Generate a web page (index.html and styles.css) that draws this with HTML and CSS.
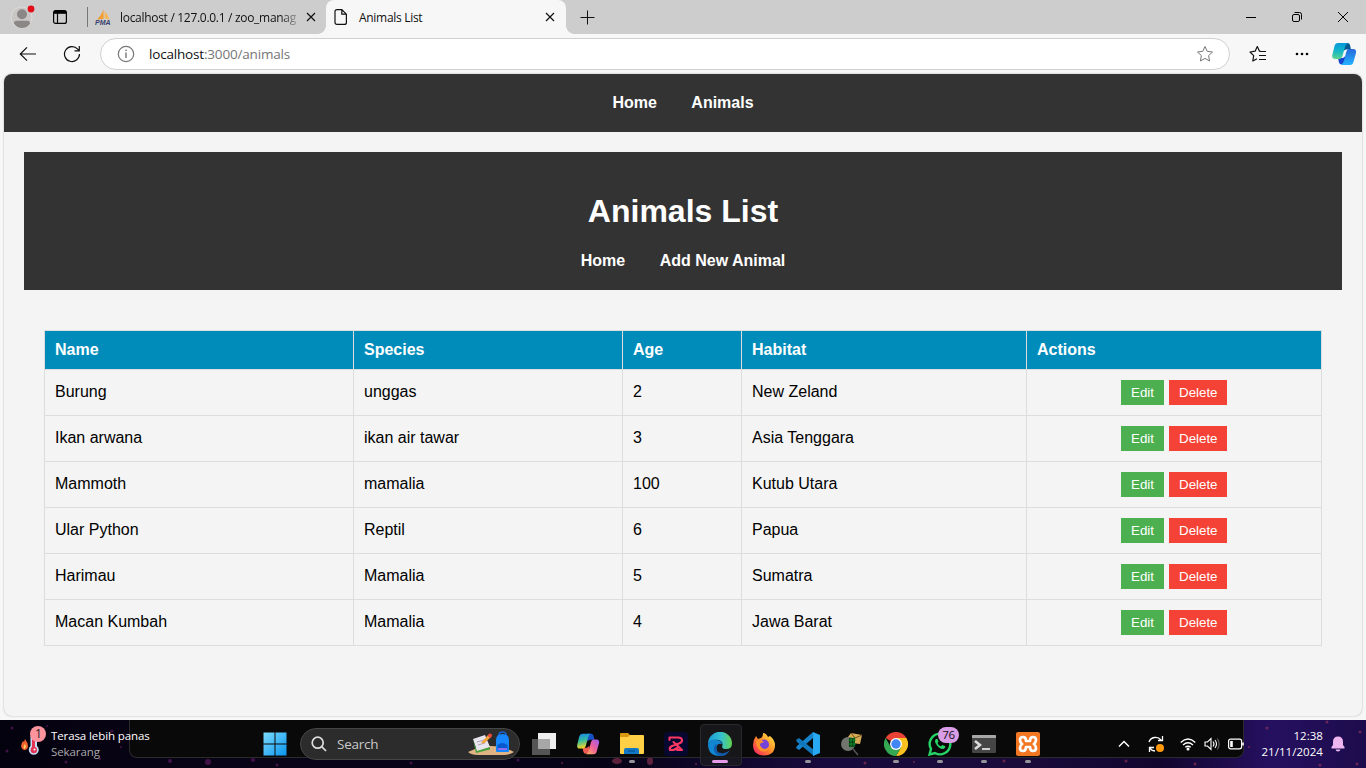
FILE: index.html
```html
<!DOCTYPE html>
<html lang="en">
<head>
<meta charset="utf-8">
<title>Animals List</title>
<link rel="stylesheet" href="styles.css">
</head>
<body>
<div class="desktop">
  <header class="tabstrip">
    <svg class="avatar" width="26" height="26" viewBox="0 0 26 26"><circle cx="12.5" cy="13.5" r="10.500" fill="#c9c7c5" stroke="#dedcda"/><circle cx="13" cy="10.300" r="5" fill="#8b8785"/><path d="M5 19.500Q5 16.800 7.500 16.800H18.500Q21 16.800 21 19.500Q18 24 13 24Q8 24 5 19.500Z" fill="#8b8785"/><circle cx="22" cy="5" r="3.400" fill="#e30b17"/></svg>
    <svg class="workspaces" width="16" height="16" viewBox="0 0 16 16" fill="none" stroke="#000"><rect x="1.600" y="1.600" width="12.800" height="12.800" rx="2" stroke-width="1.200"/><path d="M2 3.300H14" stroke-width="3"/><path d="M5.500 3V14.500" stroke-width="1.200"/></svg>
    <div class="tab tab-idle">
      <svg width="16" height="16" viewBox="0 0 16 16"><path d="M8.500 0V10L2 10.500Q6.500 6.500 8.500 0Z" fill="#f39b2d"/><path d="M9.500 2Q13.500 6 14.500 10.500L9.800 9.800Z" fill="#f7b75b"/><text x="0" y="15.700" class="pma">PMA</text></svg>
      <span class="tab-title fade">localhost / 127.0.0.1 / zoo_manag</span>
      <svg class="close" width="10" height="10" viewBox="0 0 10 10" stroke="#111" stroke-width="1.200"><path d="M1 1L9 9M9 1L1 9"/></svg>
    </div>
    <div class="tab tab-active">
      <svg width="14" height="18" viewBox="0 0 14 18" fill="none" stroke="#111" stroke-width="1.200"><path d="M3 1.600H7.800L12.400 6.200V14.400Q12.400 16.400 10.400 16.400H3Q1 16.400 1 14.400V3.600Q1 1.600 3 1.600ZM7.800 1.800V6.200H12.200"/></svg>
      <span class="tab-title">Animals List</span>
      <svg class="close" width="10" height="10" viewBox="0 0 10 10" stroke="#111" stroke-width="1.200"><path d="M1 1L9 9M9 1L1 9"/></svg>
    </div>
    <svg class="newtab" width="15" height="15" viewBox="0 0 15 15" stroke="#111"><path d="M7.500.500V14.500M.5 7.500H14.500"/></svg>
    <div class="caption">
      <svg width="12" height="12" viewBox="0 0 12 12" stroke="#000"><path d="M1 6.500H11"/></svg>
      <svg width="12" height="12" viewBox="0 0 12 12" stroke="#000" fill="none"><rect x="1.500" y="3.500" width="7" height="7" rx="1.500"/><path d="M3.500 1.500H8.500Q10.500 1.500 10.500 3.500V8.500"/></svg>
      <svg width="12" height="12" viewBox="0 0 12 12" stroke="#000"><path d="M1 1L11 11M11 1L1 11"/></svg>
    </div>
  </header>

  <div class="toolbar">
    <svg class="back" width="18" height="16" viewBox="0 0 18 16" fill="none" stroke="#111" stroke-width="1.200"><path d="M17 8H1.500M8 1.300L1.300 8L8 14.700"/></svg>
    <svg class="reload" width="18" height="18" viewBox="0 0 18 18" fill="none" stroke="#111" stroke-width="1.200"><path d="M16.500 9A7.500 7.500 0 1 1 14.700 4.200L16 5.700M16.300 1V5.800H11.500"/></svg>
    <div class="address">
      <svg width="18" height="18" viewBox="0 0 18 18" fill="none" stroke="#777"><circle cx="9" cy="9" r="7.700" stroke-width="1.200"/><path d="M9 7.500V13" stroke-width="1.400"/><circle cx="9" cy="5.300" r=".5"/></svg>
      <span class="url"><b>localhost</b>:3000/animals</span>
      <svg class="star" width="18" height="18" viewBox="0 0 18 18" fill="none" stroke="#777" stroke-linejoin="round"><path d="M9 1.500L11.200 6.300L16.500 7L12.600 10.600L13.600 16L9 13.400L4.400 16L5.400 10.600L1.500 7L6.800 6.300Z"/></svg>
    </div>
    <svg class="favorites" width="18" height="18" viewBox="0 0 18 18" fill="none" stroke="#111" stroke-width="1.200" stroke-linejoin="round"><path d="M12 6.500L10.500 6.200L8.300 1.500L6.100 6.200L1 7L4.700 10.600L3.800 16L8 13.700M11 6.500H17M10 10.500H17M10 14.500H17"/></svg>
    <svg class="more" width="16" height="4" viewBox="0 0 16 4"><circle cx="3" cy="2" r="1.300"/><circle cx="8" cy="2" r="1.300"/><circle cx="13" cy="2" r="1.300"/></svg>
    <svg class="copilot" width="26" height="26" viewBox="0 0 26 26"><defs><linearGradient id="ca" x2="0" y2="1"><stop stop-color="#0798dc"/><stop offset=".5" stop-color="#15b7c9"/><stop offset="1" stop-color="#5bd58d"/></linearGradient><linearGradient id="cb" x2="0" y2="1"><stop stop-color="#2868da"/><stop offset="1" stop-color="#22b3ff"/></linearGradient></defs><path d="M12 2H16.500Q18.500 2 19 4L20 8.500H15L12 10Z" fill="#075a91"/><path d="M7 17H12L14.500 15L14.500 23.500H10.500Q8.500 23.500 8 21.500Z" fill="#1646cf"/><path d="M7 2H17Q14.800 3 14 6L11.300 15.500Q10.500 18 8 18H4.500Q.5 18 1.300 14L3.500 5Q4.300 2 7 2Z" fill="url(#ca)"/><path d="M18 8H22Q25.700 8 25 12L22.600 20.500Q21.800 24 19 24H10Q12 23 13 19.500L15.200 11Q16 8 18 8Z" fill="url(#cb)"/></svg>
  </div>

  <main class="viewport">
    <nav class="nav site-nav"><a>Home</a> <a>Animals</a></nav>
    <section class="content">
      <header class="page-head">
        <h1>Animals List</h1>
        <nav class="nav"><a>Home</a> <a>Add New Animal</a></nav>
      </header>
      <div class="table-wrap">
        <table>
          <colgroup><col class="c-name"><col class="c-species"><col class="c-age"><col class="c-habitat"><col class="c-actions"></colgroup>
          <thead><tr><th>Name</th><th>Species</th><th>Age</th><th>Habitat</th><th>Actions</th></tr></thead>
          <tbody>
            <tr><td>Burung</td><td>unggas</td><td>2</td><td>New Zeland</td><td><div class="actions"><button class="edit">Edit</button><button class="delete">Delete</button></div></td></tr>
            <tr><td>Ikan arwana</td><td>ikan air tawar</td><td>3</td><td>Asia Tenggara</td><td><div class="actions"><button class="edit">Edit</button><button class="delete">Delete</button></div></td></tr>
            <tr><td>Mammoth</td><td>mamalia</td><td>100</td><td>Kutub Utara</td><td><div class="actions"><button class="edit">Edit</button><button class="delete">Delete</button></div></td></tr>
            <tr><td>Ular Python</td><td>Reptil</td><td>6</td><td>Papua</td><td><div class="actions"><button class="edit">Edit</button><button class="delete">Delete</button></div></td></tr>
            <tr><td>Harimau</td><td>Mamalia</td><td>5</td><td>Sumatra</td><td><div class="actions"><button class="edit">Edit</button><button class="delete">Delete</button></div></td></tr>
            <tr><td>Macan Kumbah</td><td>Mamalia</td><td>4</td><td>Jawa Barat</td><td><div class="actions"><button class="edit">Edit</button><button class="delete">Delete</button></div></td></tr>
          </tbody>
        </table>
      </div>
    </section>
  </main>

  <footer class="taskbar">
    <svg class="stars" width="1366" height="48" viewBox="0 0 1366 48"><g fill="#7b2179" opacity=".5"><circle cx="12" cy="8" r="1.500"/><circle cx="47" cy="6" r="1"/><circle cx="7" cy="31" r="1.500"/><circle cx="66" cy="42" r="1.500"/><circle cx="112" cy="11" r="1.500"/><circle cx="100" cy="39" r="1"/><circle cx="121" cy="27" r="1"/><circle cx="170" cy="41" r="2"/><circle cx="208" cy="42" r="3"/><circle cx="253" cy="40" r="2"/><circle cx="277" cy="45" r="1.500"/><circle cx="411" cy="43" r="1.500"/><circle cx="518" cy="40" r="1.500"/></g><g fill="#a43b59" opacity=".55"><ellipse cx="617" cy="41" rx="5" ry="3"/><ellipse cx="650" cy="41" rx="3" ry="4"/><circle cx="562" cy="43" r="1"/><circle cx="696" cy="44" r="1"/><circle cx="865" cy="43" r="1.500"/><circle cx="914" cy="42" r="1"/><circle cx="1004" cy="41" r="1.500"/><circle cx="1126" cy="41" r="1.500"/><circle cx="1195" cy="44" r="1.500"/><circle cx="1267" cy="8" r="1.500"/><circle cx="1327" cy="2" r="1.500"/><circle cx="1360" cy="12" r="1.500"/><circle cx="1249" cy="27" r="1"/><circle cx="1320" cy="45" r="1.500"/><circle cx="1357" cy="44" r="1.500"/></g></svg>
    <div class="backplate"></div>
    <div class="weather">
      <svg width="30" height="32" viewBox="0 0 30 32"><path d="M4 24Q0 22 1.500 18L3 15L4 16L5 13Q8 17 8 20Q8 24 4 24Z" fill="#f3632d"/><path d="M4.500 23Q2.500 21 5 18Q7 21 4.500 23Z" fill="#ffd16b"/><path d="M10.500 10V20A5 5 0 1 0 17 20V10Z" fill="#c6dff5"/><circle cx="13.800" cy="24" r="3.200" fill="#e53355"/><path d="M12 10H15V23H12Z" fill="#e53355"/><circle cx="14.500" cy="23.500" r="1" fill="#fff"/><circle cx="18" cy="8" r="8" fill="#ff949f"/><text x="18.500" y="12" class="badge-one">1</text></svg>
      <div class="weather-text"><span>Terasa lebih panas</span><span class="muted">Sekarang</span></div>
    </div>
    <svg class="start" width="24" height="24" viewBox="0 0 24 24"><defs><linearGradient id="win" x2="1" y2="1"><stop stop-color="#7ddcff"/><stop offset="1" stop-color="#0a94ee"/></linearGradient></defs><path d="M.5.500H11.500V11.500H.5ZM12.500.500H23.500V11.500H12.500ZM.5 12.500H11.500V23.500H.5ZM12.500 12.500H23.500V23.500H12.500Z" fill="url(#win)"/></svg>
    <div class="search">
      <svg width="16" height="16" viewBox="0 0 16 16" fill="none" stroke="#ddd" stroke-width="1.700"><circle cx="6.700" cy="6.700" r="5.500"/><path d="M10.700 10.700L15 15"/></svg>
      <span>Search</span>
      <svg class="doodle" width="46" height="26" viewBox="0 0 46 26"><path d="M0 21Q23 9 46 21Q42 24 36 24H10Q3 24 0 21Z" fill="#deb485"/><path d="M5 8L17 4L22 16L9 20Z" fill="#e9e5ef"/><path d="M5 8L9 20L22 16V18.500L8 22Z" fill="#47a23d"/><path d="M9 11L16 9M10 14L17 12" stroke="#aaa4b5"/><path d="M13 12L20 4L23 6L16 12.500Z" fill="#f2a33a"/><circle cx="22" cy="4.500" r="2" fill="#ed4a3d"/><path d="M31 4Q31 1 34.500 1Q38 1 38 4" fill="none" stroke="#1563d8" stroke-width="1.500"/><path d="M28 9Q28 3 34.500 3Q41 3 41 9V20Q41 21 40 21H29Q28 21 28 20Z" fill="#1687ff"/><path d="M29.500 14Q34 10 39.500 14V19H29.500Z" fill="#0759cf"/><path d="M30 18H39" stroke="#b875ff" stroke-width="1.500"/></svg>
    </div>
    <div class="apps">
      <div class="app"><svg width="24" height="24" viewBox="0 0 24 24"><rect x="6" y="1" width="18" height="16" fill="#eee"/><rect y="7" width="18" height="16" fill="#555"/><path d="M6 7H18V17H6Z" fill="#a7a7a7"/></svg></div>
      <div class="app"><svg width="24" height="24" viewBox="0 0 26 26"><defs><linearGradient id="cc" x2=".2" y2="1"><stop stop-color="#1686ed"/><stop offset=".5" stop-color="#35bd9d"/><stop offset="1" stop-color="#f1d528"/></linearGradient><linearGradient id="cd" x1="1" x2="0" y2="1"><stop stop-color="#9b5cf5"/><stop offset=".5" stop-color="#ee6199"/><stop offset="1" stop-color="#ffb35b"/></linearGradient></defs><path d="M12 2H16.500Q18.500 2 19 4L20 8.500H15L12 10Z" fill="#164fc7"/><path d="M7 17H12L14.500 15L14.500 23.500H10.500Q8.500 23.500 8 21.500Z" fill="#f05b52"/><path d="M7 2H16Q13.800 3 13 6L10.500 15.500Q9.800 18 7 18H4.500Q.5 18 1.300 14L3.500 5Q4.300 2 7 2Z" fill="url(#cc)"/><path d="M19 8H22Q25.700 8 25 12L22.600 20.500Q21.800 24 19 24H11Q13 23 14 19.500L16.200 11Q17 8 19 8Z" fill="url(#cd)"/></svg></div>
      <div class="app open"><svg width="24" height="24" viewBox="0 0 24 24"><path d="M0 2Q0 1 1 1H8L10 3V6H0Z" fill="#d9980d"/><path d="M0 5H8L10 3H23Q24 3 24 4V21Q24 22 23 22H1Q0 22 0 21Z" fill="#ffcf45"/><path d="M4 22V18Q4 16 6 16H17Q19 16 19 18V22Z" fill="#1278c5"/><path d="M8 19H15" stroke="#075495" stroke-width="1.300"/></svg></div>
      <div class="app"><svg width="24" height="24" viewBox="0 0 24 24"><rect width="24" height="24" rx="4" fill="#07082f"/><path d="M5.500 8V5.500H14Q18 5.500 18 8.500Q18 10.500 15 11.500L8 14Q5 15.500 6 18H9.500L14 15.500M9.500 10L18 18H13" fill="none" stroke="#ff3864" stroke-width="2.100" stroke-linejoin="round" stroke-linecap="round"/></svg></div>
      <div class="app open active"><svg width="24" height="24" viewBox="0 0 24 24"><defs><linearGradient id="ea" x2="1"><stop stop-color="#199bd8"/><stop offset=".55" stop-color="#35c1d0"/><stop offset="1" stop-color="#61d34f"/></linearGradient></defs><path d="M0 12A12 12 0 0 1 24 11.500Q24 17 18 17Q13 17 14.500 13Q15 9 10 8Q3 7 0 12Z" fill="url(#ea)"/><path d="M0 12Q3 7 9 8Q14 9 14 12Q9 11 8.500 15.500Q8 21 14 23.800Q0 25 0 12Z" fill="#1187d4"/><path d="M9 12Q6 20 13 21Q18 22 22 18Q18 25 12 24Q5 22 6 15Q7 12 9 12Z" fill="#105bab"/></svg></div>
      <div class="app"><svg width="24" height="24" viewBox="0 0 24 24"><defs><linearGradient id="fx" x1="1" x2="0" y2="1"><stop stop-color="#fff34d"/><stop offset=".5" stop-color="#ff8b27"/><stop offset="1" stop-color="#f5166b"/></linearGradient></defs><path d="M4 4L6 7L9 6Q11 5 11 1Q14 1 16 5L18 4Q23 8 23 13Q23 23 12 23.500Q1 23 1 13Q1 8 4 4Z" fill="url(#fx)"/><circle cx="12" cy="12.500" r="5" fill="#7543d7"/><path d="M4 9Q8 6 12 10L9 11Q7 12 9 15Q13 19 17 15Q15 21 9 19Q4 16 4 9Z" fill="#ff9228"/></svg></div>
      <div class="app open"><svg width="24" height="24" viewBox="0 0 24 24"><path d="M17 6L3 18L0 16L1 14L17 0Z" fill="#1683cc"/><path d="M1 10L0 8L3 6L18 18V24L1 10Z" fill="#1278bd"/><path d="M17 0L24 3V21L17 24L17 0Z" fill="#26a8f2"/></svg></div>
      <div class="app"><svg width="24" height="24" viewBox="0 0 24 24"><path d="M8 5L11 1L22 3L20 12L12 11Z" fill="#d7aa55"/><path d="M11 1L15 6L22 3" stroke="#73531c" fill="none"/><circle cx="8" cy="12" r="7" fill="#72746f"/><path d="M9 6H15V15H9Z" fill="#0b3914"/><path d="M11 5V16M14 5V15M8 8H16M8 12H16" stroke="#159a30" stroke-width=".8"/><path d="M13 17L18 23" stroke="#555" stroke-width="1.500"/></svg></div>
      <div class="app open"><svg width="24" height="24" viewBox="0 0 24 24"><path d="M12 12L1.600 6A12 12 0 0 1 22.400 6H12Z" fill="#ea4335"/><path d="M12 12L12 6H22.400A12 12 0 0 1 12 24L17.200 15Z" fill="#fbc11e"/><path d="M12 12L17.200 15L12 24A12 12 0 0 1 1.600 6L6.800 15Z" fill="#34a853"/><circle cx="12" cy="12" r="6" fill="#fff"/><circle cx="12" cy="12" r="4.700" fill="#4285f4"/></svg></div>
      <div class="app open"><svg width="24" height="24" viewBox="0 0 24 24"><path d="M1.500 22.500L3 17A10.300 10.300 0 1 1 7 21Z" fill="none" stroke="#25d366" stroke-width="2.400"/><path d="M8 7Q6 9 8 12Q11 17 15 17Q18 16 17 14L14 13L13 14.500Q10 13 9.500 11L10.500 9.500L9.500 7Z" fill="#25d366"/></svg><span class="count">76</span></div>
      <div class="app open"><svg width="24" height="24" viewBox="0 0 24 24"><rect y="3" width="24" height="18" rx="1" fill="#454545"/><path d="M0 6V4Q0 3 1 3H23Q24 3 24 4V6Z" fill="#a7a7a7"/><path d="M3 9L8 13L3 17" fill="none" stroke="#ddd" stroke-width="2.500"/><path d="M10 17H18" stroke="#fff" stroke-width="1.500"/></svg></div>
      <div class="app open"><svg width="24" height="24" viewBox="0 0 24 24"><rect width="24" height="24" rx="2" fill="#f37623"/><path d="M12 9H10Q10 5 7 5Q4 5 4 8Q4 10.500 6.200 12Q4 13.500 4 16Q4 19 7 19Q10 19 10 15H14Q14 19 17 19Q20 19 20 16Q20 13.500 17.800 12Q20 10.500 20 8Q20 5 17 5Q14 5 14 9Z" fill="none" stroke="#fff" stroke-width="2.700" stroke-linejoin="round"/></svg></div>
    </div>
    <div class="tray">
      <svg class="chevron" width="12" height="8" viewBox="0 0 12 8" fill="none" stroke="#fff" stroke-width="1.500"><path d="M1 6.500L6 1.500L11 6.500"/></svg>
      <svg class="sync" width="18" height="18" viewBox="0 0 18 18" fill="none" stroke="#fff" stroke-width="1.300"><path d="M2 7A7 7 0 0 1 14 5M15.500 1V5.500H11M2.500 17V12.500H7M3 13.500Q5 16 8 16"/><circle cx="13" cy="13" r="4" fill="#ff990b" stroke="none"/></svg>
      <svg class="wifi" width="16" height="14" viewBox="0 0 16 14" fill="none" stroke="#fff" stroke-width="1.400"><path d="M.7 5.500Q8-1.500 15.300 5.500M3 8Q8 3.500 13 8M5.300 10.300Q8 8 10.700 10.300"/><circle cx="8" cy="12" r="1.500" fill="#fff" stroke="none"/></svg>
      <svg class="speaker" width="16" height="14" viewBox="0 0 16 14" fill="none" stroke="#fff" stroke-width="1.100"><path d="M1 5H3.500L7 1.500V12.500L3.500 9H1ZM9 4.500Q11 7 9 9.500M11 3Q14 7 11 11"/><path d="M13.300 1.500Q17 7 13.300 12.500" stroke="#666"/></svg>
      <svg class="battery" width="16" height="12" viewBox="0 0 16 12" fill="none" stroke="#fff" stroke-width="1.200"><rect x=".6" y="1.200" width="13" height="9.600" rx="2"/><path d="M3.500 3V9" stroke-width="2.600"/><path d="M15 4.500V7.500" stroke-width="1.600"/></svg>
    </div>
    <div class="clock"><span>12:38</span><span>21/11/2024</span></div>
    <svg class="bell" width="14" height="16" viewBox="0 0 14 16" fill="#efb5ef"><path d="M.5 12.500V11L2 9V6Q2 .5 7 .5Q12 .5 12 6V9L13.500 11V12.500ZM4.500 13.500H9.500Q9 15.500 7 15.500Q5 15.500 4.500 13.500Z"/></svg>
  </footer>
</div>
</body>
</html>
```
FILE: styles.css
```css
* { box-sizing: border-box; }
body { margin: 0; overflow: hidden; }
svg { display: block; flex: none; }

.desktop {
  width: 1366px;
  height: 768px;
  display: flex;
  flex-direction: column;
  background: #f7f7f7;
  font-family: "Open Sans", "Noto Sans", sans-serif;
}

/* Browser tabs */
.tabstrip { height: 34px; flex: none; display: flex; align-items: center; background: #cdcdcd; }
.avatar { margin: 0 0 1px 9px; }
.workspaces { margin-left: 17px; }
.tab { display: flex; align-items: center; font-size: 12px; color: #111; }
.tab-title { white-space: nowrap; letter-spacing: -0.3px; }
.tab-idle { width: 240px; height: 20px; margin-left: 19px; border-left: 1px solid #777; padding: 0 9px 0 7px; }
.tab-idle .tab-title { margin-left: 9px; width: 178px; }
.tab-idle .close { margin-left: 8px; }
.fade { -webkit-mask-image: linear-gradient(90deg, #000 90%, #0003); mask-image: linear-gradient(90deg, #000 90%, #0003); }
.pma { font: italic bold 7px "Liberation Sans", sans-serif; fill: #39406f; }
.tab-active { width: 240px; height: 34px; margin-left: -1px; padding: 0 11px 0 8px; border-radius: 8px 8px 0 0; background: #f7f7f7; position: relative; }
.tab-active::before, .tab-active::after { content: ""; position: absolute; bottom: 0; width: 8px; height: 8px; }
.tab-active::before { left: -8px; background: radial-gradient(circle at 0 0, transparent 7.5px, #f7f7f7 8px); }
.tab-active::after { right: -8px; background: radial-gradient(circle at 100% 0, transparent 7.5px, #f7f7f7 8px); }
.tab-active .tab-title { margin-left: 11px; }
.tab-active .close { margin-left: auto; }
.newtab { margin-left: 14px; }
.caption { margin-left: auto; display: flex; gap: 34px; padding-right: 17px; }

/* Toolbar */
.toolbar { height: 40px; flex: none; display: flex; align-items: center; }
.back { margin-left: 19px; }
.reload { margin-left: 26px; }
.address { width: 1130px; height: 32px; margin-left: 19px; padding: 0 15px 0 16px; display: flex; align-items: center; border: 1px solid #d0d0d0; border-radius: 16px; background: #fff; }
.url { margin-left: 14px; font-size: 13.5px; letter-spacing: -0.18px; color: #767676; }
.url b { font-weight: 400; color: #111; }
.star { margin-left: auto; }
.favorites { margin-left: 19px; }
.more { margin-left: 27px; }
.copilot { margin-left: 21px; }

/* Web page */
.viewport {
  height: 642px;
  flex: none;
  margin: 0 4px 4px;
  overflow: hidden;
  border-radius: 8px;
  background: #f4f4f4;
  box-shadow: 0 0 2px #aaa;
  font: 16px "Liberation Sans", Arial, sans-serif;
  color: #000;
}
.nav { text-align: center; line-height: 18px; color: #fff; font-weight: 700; }
.nav a { margin: 0 15px; }
.site-nav { padding: 20px; background: #333; }
.content { padding: 20px; }
.page-head { height: 138px; padding: 20px; background: #333; color: #fff; text-align: center; }
.page-head h1 { margin: 21px 0 23px; font-size: 32px; line-height: 36px; }
.table-wrap { padding: 40px 20px 0; }
table { width: 1278px; table-layout: fixed; border-collapse: collapse; }
th, td { border: 1px solid #ddd; padding: 10px; line-height: 18px; text-align: left; }
td { vertical-align: top; padding-top: 13px; }
td:last-child { padding-top: 10px; }
th { background: #008cba; color: #fff; }
.c-name { width: 309px; }
.c-species { width: 269px; }
.c-age { width: 119px; }
.c-habitat { width: 285px; }
.c-actions { width: 295px; }
.actions { display: flex; justify-content: center; gap: 5px; }
button { height: 25px; padding: 5px 10px; border: 0; font: 13.333px/15px "Liberation Sans", Arial, sans-serif; color: #fff; }
.edit { width: 43px; background: #4caf50; }
.delete { width: 58px; background: #f44336; }

/* Taskbar */
.taskbar {
  position: relative;
  height: 48px;
  flex: none;
  display: flex;
  align-items: center;
  overflow: hidden;
  color: #fff;
  background: linear-gradient(90deg, #05020f 0, #090418 20%, #070317 45%, #180a3c 60%, #1a0b3b 75%, #12062e 85%, #251060 93%, #1d0c4c 100%);
}
.taskbar > * { position: relative; flex: none; }
.taskbar > .stars { position: absolute; left: 0; top: 0; }
.taskbar > .backplate { position: absolute; left: 129px; top: 0; width: 1115px; height: 38px; background: #090909; border: 1px solid #2b2b2e; border-top: 0; border-radius: 0 0 8px 8px; }
.weather { display: flex; align-items: center; width: 263px; padding-left: 20px; }
.weather svg { margin-top: -4px; }
.weather-text { display: flex; flex-direction: column; padding-left: 1px; font-size: 11.5px; line-height: 16px; letter-spacing: -0.1px; white-space: nowrap; }
.muted { color: #aaa; }
.badge-one { font: 12px "Open Sans", sans-serif; fill: #222; text-anchor: middle; }
.search { width: 220px; height: 32px; margin-left: 13px; padding: 0 5px 0 10px; display: flex; align-items: center; border: 1px solid #464646; border-radius: 16px; background: #2c2c2c; font-size: 13.5px; letter-spacing: -0.25px; color: #c8c8c8; }
.search span { margin-left: 10px; }
.doodle { margin-left: auto; }
.apps { display: flex; margin-left: 2px; }
.app { position: relative; width: 44px; height: 48px; display: flex; align-items: center; justify-content: center; }
.app svg { position: relative; }
.open::after { content: ""; position: absolute; left: 19px; bottom: 5px; width: 6px; height: 3px; border-radius: 2px; background: #96949b; }
.active::before { content: ""; position: absolute; left: 2px; top: 4px; width: 40px; height: 40px; border: 1px solid #29292d; border-radius: 4px; background: #1b1b1fcc; }
.active::after { left: 14px; width: 16px; background: #e59bea; }
.count { position: absolute; left: 20px; top: 7px; width: 21px; height: 16px; border-radius: 8px; background: #d99de5; color: #111; font-size: 11.5px; line-height: 16px; text-align: center; letter-spacing: -0.3px; }
.tray { display: flex; align-items: center; margin-left: 68px; }
.sync { margin-left: 17px; margin-top: -1px; }
.wifi { margin-left: 15px; }
.speaker { margin-left: 8px; }
.battery { margin-left: 8px; }
.clock { display: flex; flex-direction: column; width: 79px; text-align: right; font-size: 11.5px; line-height: 16px; letter-spacing: 0.05px; }
.bell { margin-left: 8px; }
```
